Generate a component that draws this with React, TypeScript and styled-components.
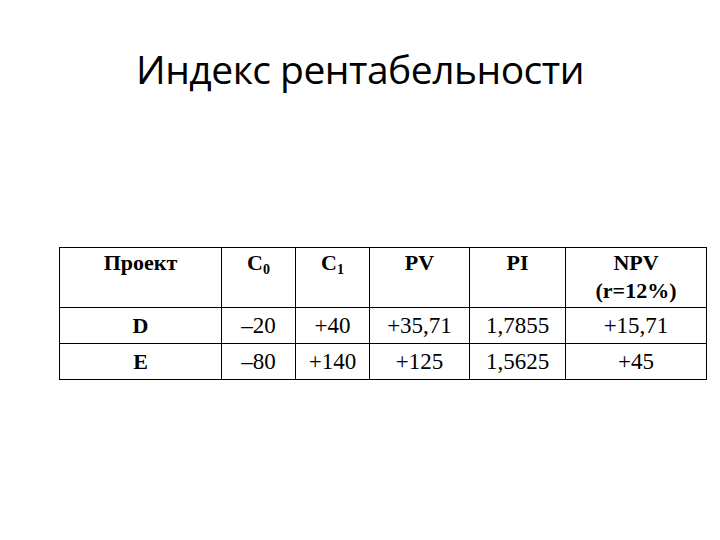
import React from "react";
import styled, { createGlobalStyle } from "styled-components";

const GlobalStyle = createGlobalStyle`
  html, body {
    margin: 0;
    padding: 0;
    background: #ffffff;
  }
`;

const Slide = styled.div`
  width: 720px;
  height: 540px;
  background: #ffffff;
  display: flex;
  flex-direction: column;
  align-items: flex-start;
`;

const Title = styled.h1`
  align-self: stretch;
  margin: 0;
  padding-top: 39px;
  height: 247px;
  box-sizing: border-box;
  text-align: center;
  font-family: "Open Sans", "Noto Sans", sans-serif;
  font-weight: 400;
  font-size: 39px;
  letter-spacing: -0.5px;
  line-height: 60px;
  color: #000000;
`;

const Table = styled.table`
  margin-left: 59px;
  border-collapse: collapse;
  table-layout: fixed;
  font-family: "Liberation Serif", "Times New Roman", serif;
  color: #000000;
`;

const HeadCell = styled.th`
  border: 1.5px solid #000000;
  height: 60px;
  padding: 1px 2px 0;
  box-sizing: border-box;
  vertical-align: top;
  text-align: center;
  font-weight: 700;
  font-size: 22px;
  line-height: 28px;
`;

const Cell = styled.td<{ $bold?: boolean }>`
  border: 1.5px solid #000000;
  height: 36px;
  padding: 0 2px;
  box-sizing: border-box;
  text-align: center;
  vertical-align: middle;
  font-weight: ${(p) => (p.$bold ? 700 : 400)};
  font-size: ${(p) => (p.$bold ? 22 : 23)}px;
  line-height: 26px;
`;

const Sub = styled.sub`
  font-size: 14px;
  vertical-align: -4px;
  line-height: 0;
`;

const widths = [162, 74, 74, 100, 96, 141];

const rows = [
  { name: "D", c0: "–20", c1: "+40", pv: "+35,71", pi: "1,7855", npv: "+15,71" },
  { name: "E", c0: "–80", c1: "+140", pv: "+125", pi: "1,5625", npv: "+45" },
];

const App = () => {
  return (
    <>
      <GlobalStyle />
      <Slide>
        <Title>Индекс рентабельности</Title>
        <Table>
          <colgroup>
            {widths.map((w, i) => (
              <col key={i} style={{ width: w }} />
            ))}
          </colgroup>
          <thead>
            <tr>
              <HeadCell>Проект</HeadCell>
              <HeadCell>
                C<Sub>0</Sub>
              </HeadCell>
              <HeadCell>
                C<Sub>1</Sub>
              </HeadCell>
              <HeadCell>PV</HeadCell>
              <HeadCell>PI</HeadCell>
              <HeadCell>
                NPV
                <br />
                (r=12%)
              </HeadCell>
            </tr>
          </thead>
          <tbody>
            {rows.map((r) => (
              <tr key={r.name}>
                <Cell $bold>{r.name}</Cell>
                <Cell>{r.c0}</Cell>
                <Cell>{r.c1}</Cell>
                <Cell>{r.pv}</Cell>
                <Cell>{r.pi}</Cell>
                <Cell>{r.npv}</Cell>
              </tr>
            ))}
          </tbody>
        </Table>
      </Slide>
    </>
  );
};

export default App;
